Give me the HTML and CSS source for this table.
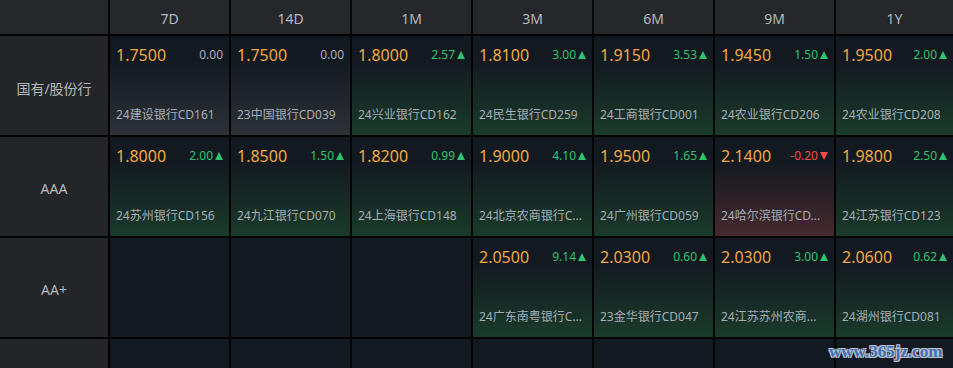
FILE: index.html
```html
<!DOCTYPE html>
<html lang="zh">
<head>
<meta charset="utf-8">
<link rel="stylesheet" href="styles.css">
</head>
<body>
<div class="board">
  <div class="corner"></div>
  <div class="head">7D</div>
  <div class="head">14D</div>
  <div class="head">1M</div>
  <div class="head">3M</div>
  <div class="head">6M</div>
  <div class="head">9M</div>
  <div class="head">1Y</div>

  <div class="label">国有/股份行</div>
  <div class="cell flat"><div class="top"><span class="price">1.7500</span><span class="chg">0.00</span></div><div class="name">24建设银行CD161</div></div>
  <div class="cell flat"><div class="top"><span class="price">1.7500</span><span class="chg">0.00</span></div><div class="name">23中国银行CD039</div></div>
  <div class="cell up"><div class="top"><span class="price">1.8000</span><span class="chg">2.57<i class="tri"></i></span></div><div class="name">24兴业银行CD162</div></div>
  <div class="cell up"><div class="top"><span class="price">1.8100</span><span class="chg">3.00<i class="tri"></i></span></div><div class="name">24民生银行CD259</div></div>
  <div class="cell up"><div class="top"><span class="price">1.9150</span><span class="chg">3.53<i class="tri"></i></span></div><div class="name">24工商银行CD001</div></div>
  <div class="cell up"><div class="top"><span class="price">1.9450</span><span class="chg">1.50<i class="tri"></i></span></div><div class="name">24农业银行CD206</div></div>
  <div class="cell up"><div class="top"><span class="price">1.9500</span><span class="chg">2.00<i class="tri"></i></span></div><div class="name">24农业银行CD208</div></div>

  <div class="label">AAA</div>
  <div class="cell up"><div class="top"><span class="price">1.8000</span><span class="chg">2.00<i class="tri"></i></span></div><div class="name">24苏州银行CD156</div></div>
  <div class="cell up"><div class="top"><span class="price">1.8500</span><span class="chg">1.50<i class="tri"></i></span></div><div class="name">24九江银行CD070</div></div>
  <div class="cell up"><div class="top"><span class="price">1.8200</span><span class="chg">0.99<i class="tri"></i></span></div><div class="name">24上海银行CD148</div></div>
  <div class="cell up"><div class="top"><span class="price">1.9000</span><span class="chg">4.10<i class="tri"></i></span></div><div class="name">24北京农商银行C...</div></div>
  <div class="cell up"><div class="top"><span class="price">1.9500</span><span class="chg">1.65<i class="tri"></i></span></div><div class="name">24广州银行CD059</div></div>
  <div class="cell down"><div class="top"><span class="price">2.1400</span><span class="chg">-0.20<i class="tri"></i></span></div><div class="name">24哈尔滨银行CD...</div></div>
  <div class="cell up"><div class="top"><span class="price">1.9800</span><span class="chg">2.50<i class="tri"></i></span></div><div class="name">24江苏银行CD123</div></div>

  <div class="label">AA+</div>
  <div class="cell empty"></div>
  <div class="cell empty"></div>
  <div class="cell empty"></div>
  <div class="cell up"><div class="top"><span class="price">2.0500</span><span class="chg">9.14<i class="tri"></i></span></div><div class="name">24广东南粤银行C...</div></div>
  <div class="cell up"><div class="top"><span class="price">2.0300</span><span class="chg">0.60<i class="tri"></i></span></div><div class="name">23金华银行CD047</div></div>
  <div class="cell up"><div class="top"><span class="price">2.0300</span><span class="chg">3.00<i class="tri"></i></span></div><div class="name">24江苏苏州农商...</div></div>
  <div class="cell up"><div class="top"><span class="price">2.0600</span><span class="chg">0.62<i class="tri"></i></span></div><div class="name">24湖州银行CD081</div></div>

  <div class="label"></div>
  <div class="cell empty"></div>
  <div class="cell empty"></div>
  <div class="cell empty"></div>
  <div class="cell empty"></div>
  <div class="cell empty"></div>
  <div class="cell empty"></div>
  <div class="cell empty"></div>
</div>
<div class="watermark">www.365jz.com</div>
</body>
</html>
```

FILE: styles.css
```css
html, body {
  margin: 0;
  padding: 0;
  background: #030303;
  width: 953px;
  height: 368px;
  overflow: hidden;
  font-family: "Noto Sans", "Noto Sans CJK SC", sans-serif;
}

.board {
  display: grid;
  grid-template-columns: 108px repeat(6, 119px) 117px;
  grid-template-rows: 34px 99px 99px 99px 29px;
  gap: 2px;
  width: 953px;
  height: 368px;
  background: #030303;
}

.corner, .head {
  background: #26272b;
}

.head {
  display: flex;
  align-items: center;
  justify-content: center;
  padding-top: 3px;
  box-sizing: border-box;
  color: #b4b8bf;
  font-size: 14px;
}

.label {
  background: #242528;
  color: #b4b8bf;
  font-size: 14px;
  display: flex;
  align-items: center;
  justify-content: center;
  padding-top: 4px;
  box-sizing: border-box;
}

.cell {
  box-sizing: border-box;
  padding: 8px 6px 11px 6px;
  display: flex;
  flex-direction: column;
  justify-content: space-between;
  min-width: 0;
  background: #131920;
}

.cell.flat {
  background: linear-gradient(to bottom, #131920 25%, #2d3238 100%);
}

.cell.up {
  background: linear-gradient(to bottom, #131920 25%, #1a3b2b 100%);
}

.cell.down {
  background: linear-gradient(to bottom, #131920 25%, #452a2e 100%);
}

.top {
  display: flex;
  justify-content: space-between;
  align-items: center;
  height: 22px;
}

.price {
  color: #f2a83e;
  font-size: 16px;
  line-height: 22px;
}

.chg {
  color: #a8afb8;
  font-size: 12px;
  line-height: 16px;
  display: flex;
  align-items: center;
  gap: 2px;
}

.up .chg {
  color: #2cc46c;
}

.down .chg {
  color: #f24a4a;
}

.tri {
  display: block;
  width: 0;
  height: 0;
  border-left: 4.5px solid transparent;
  border-right: 4.5px solid transparent;
}

.up .tri {
  border-bottom: 8px solid #2cc46c;
}

.down .tri {
  border-top: 8px solid #f24a4a;
}

.name {
  color: #a6adb6;
  font-size: 12px;
  line-height: 18px;
  white-space: nowrap;
  overflow: hidden;
  text-overflow: ellipsis;
}

.watermark {
  position: absolute;
  left: 829px;
  top: 342px;
  font-family: "Liberation Serif", serif;
  font-weight: bold;
  font-size: 17px;
  line-height: 20px;
  color: #3e6fb6;
  text-shadow: -1px -1px 0 #bfc4cc, 1px -1px 0 #bfc4cc, -1px 1px 0 #bfc4cc, 1px 1px 0 #bfc4cc, 0 0 2px #8890a0;
}
```
